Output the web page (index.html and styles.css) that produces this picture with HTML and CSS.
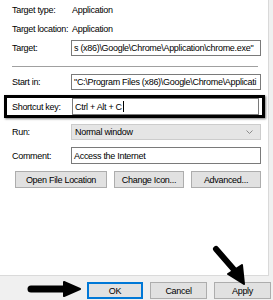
FILE: index.html
```html
<!DOCTYPE html>
<html>
<head>
<meta charset="utf-8" />
<title>Properties - Shortcut</title>
<link rel="stylesheet" href="styles.css">
</head>
<body>
<div id="wrap">
	<div class="page">
		<div class="row"><span class="lbl">Target type:</span><span class="val">Application</span></div>
		<div class="row"><span class="lbl">Target location:</span><span class="val">Application</span></div>
		<div class="row"><span class="lbl">Target:</span><span class="field">s (x86)\Google\Chrome\Application\chrome.exe"</span></div>
		<hr class="sep" />
		<div class="row row_start"><span class="lbl">Start in:</span><span class="field">"C:\Program Files (x86)\Google\Chrome\Applicati</span></div>
		<div class="hilite">
			<div class="row"><span class="lbl">Shortcut key:</span><span class="field key">Ctrl + Alt + C<i class="caret"></i></span></div>
		</div>
		<div class="row row_run"><span class="lbl">Run:</span><span class="field combo">Normal window<svg class="chev" width="7" height="4" viewBox="0 0 7 4"><path d="M0.5 0.5 L3.5 3.5 L6.5 0.5" fill="none" stroke="#8a8a8a" stroke-width="1"/></svg></span></div>
		<div class="row row_cmt"><span class="lbl">Comment:</span><span class="field">Access the Internet</span></div>
		<div class="btns">
			<span class="btn b_open">Open File Location</span>
			<span class="btn b_icon">Change Icon...</span>
			<span class="btn b_adv">Advanced...</span>
		</div>
	</div>
	<div class="foot">
		<span class="btn def">OK</span>
		<span class="btn">Cancel</span>
		<span class="btn">Apply</span>
	</div>

	<!-- 화살표 표시 -->
	<svg class="marks" width="273" height="300" viewBox="0 0 273 300">
		<path d="M31 289 L66 289" stroke="#000" stroke-width="7" stroke-linecap="round" fill="none"/>
		<path d="M64 282 L80 289 L64 296 Z" fill="#000" stroke="#000" stroke-width="2" stroke-linejoin="round"/>
		<path d="M216 249 L236 272" stroke="#000" stroke-width="6" stroke-linecap="round" fill="none"/>
		<path d="M228 274 L244 284 L242 265 Z" fill="#000" stroke="#000" stroke-width="2" stroke-linejoin="round"/>
	</svg>
</div>
</body>
</html>
```

FILE: styles.css
```css
	/** 공통 **/
	*{margin:0; padding:0; box-sizing:border-box;}
	html, body{width:273px; height:300px; overflow:hidden;}
	body{
		background-color:#f0f0f0;
		font-family:"Liberation Sans", Arial, sans-serif;
		font-size:9px;
		letter-spacing:-0.3px;
		color:#000;
	}
	#wrap{position:relative; width:273px; height:300px;}

	/* 탭 페이지 */
	.page{
		width:269px;
		height:276px;
		padding:2px 7px 0 12px;
		background-color:#fff;
		border-right:1px solid #d9d9d9;
		border-bottom:1px solid #dadada;
	}
	.row{display:flex; align-items:center; height:16px; margin-top:3px;}
	.row:first-child{margin-top:0;}
	.lbl{flex:0 0 59px; white-space:nowrap;}
	.val{padding-left:1px;}

	.field{
		flex:1;
		min-width:0;
		display:flex;
		align-items:center;
		height:16px;
		padding:0 2px;
		border:1px solid #7a7a7a;
		background-color:#fff;
		white-space:nowrap;
		overflow:hidden;
	}

	.sep{height:0; border:0; border-top:1px solid #a0a0a0; margin:10px 3px 0 0;}
	.row_start{margin-top:7px;}

	/* 단축키 강조 */
	.hilite{
		margin:5px -4px 0 -8px;
		padding:0 3px 0 5px;
		border:3px solid #000;
		box-shadow:1px 1px 2px rgba(0,0,0,0.5);
	}
	.hilite .row{margin:0; height:17px;}
	.hilite .lbl{flex-basis:60px;}
	.key{height:17px;}
	.caret{display:inline-block; width:1px; height:11px; background:#000; margin-left:1px;}

	.row_run{margin-top:6px;}
	.combo{
		justify-content:space-between;
		padding:0 7px 0 3px;
		border-color:#cccccc;
		background-color:#e5e5e5;
	}
	.row_cmt{margin-top:7px; height:17px;}
	.row_cmt .field{height:17px;}

	/* 버튼 */
	.btns{display:flex; margin:7px 0 0 3px; gap:7px;}
	.btn{
		display:flex;
		align-items:center;
		justify-content:center;
		height:17px;
		border:1px solid #adadad;
		background-color:#e1e1e1;
		white-space:nowrap;
	}
	.b_open{width:92px;}
	.b_icon{width:70px;}
	.b_adv{width:70px;}

	.foot{display:flex; justify-content:flex-end; gap:7px; padding:6px 2px 0 0;}
	.foot .btn{width:57px;}
	.foot .def{width:56px; border:2px solid #0078d7;}

	.marks{position:absolute; left:0; top:0; pointer-events:none;}
```
